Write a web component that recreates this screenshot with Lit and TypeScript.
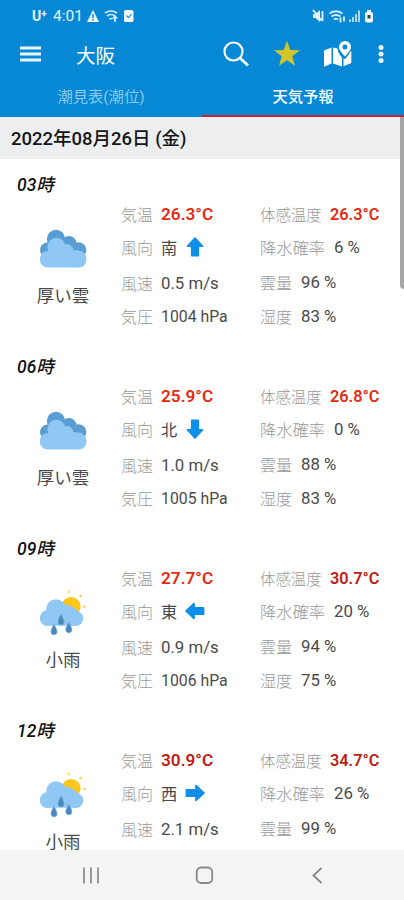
import { LitElement, html, css, svg, nothing } from "lit";
import { customElement, property } from "lit/decorators.js";

const fonts = css`Roboto, "Noto Sans CJK JP", sans-serif`;

interface Hour {
  time: string;
  sky: "cloud" | "rain";
  temp: string;
  feels: string;
  wind: string;
  angle: number;
  speed: string;
  pressure?: string;
  pop: string;
  clouds: string;
  humidity?: string;
  tone: string;
  feelsTone: string;
}

const HOURS: Hour[] = [
  { time: "03", sky: "cloud", temp: "26.3", feels: "26.3", wind: "南", angle: 0, speed: "0.5", pressure: "1004", pop: "6", clouds: "96", humidity: "83", tone: "red", feelsTone: "red" },
  { time: "06", sky: "cloud", temp: "25.9", feels: "26.8", wind: "北", angle: 180, speed: "1.0", pressure: "1005", pop: "0", clouds: "88", humidity: "83", tone: "red", feelsTone: "red" },
  { time: "09", sky: "rain", temp: "27.7", feels: "30.7", wind: "東", angle: 270, speed: "0.9", pressure: "1006", pop: "20", clouds: "94", humidity: "75", tone: "red", feelsTone: "deep" },
  { time: "12", sky: "rain", temp: "30.9", feels: "34.7", wind: "西", angle: 90, speed: "2.1", pop: "26", clouds: "99", tone: "deep", feelsTone: "deep" },
];

const cloudIcon = svg`
  <g fill="#5a9dd2"><circle cx="18" cy="14" r="9.200"/><circle cx="31" cy="18.500" r="7.500"/><circle cx="40.500" cy="25" r="7.800"/><circle cx="9.500" cy="25" r="7.500"/></g>
  <g fill="#8fc8f5"><circle cx="18.500" cy="22" r="9.200"/><circle cx="29" cy="25.500" r="6.500"/><circle cx="10" cy="34" r="8"/><circle cx="40" cy="34" r="8.400"/><circle cx="37" cy="30.500" r="5.500"/><rect x="2" y="27" width="46.400" height="15.500" rx="7.500"/></g>`;

const rainIcon = svg`
  <circle cx="33" cy="17.500" r="9.600" fill="#fdc61a"/>
  <path stroke="#fdc94e" stroke-width="1.700" stroke-linecap="round" d="M30.500 2.200l.3 1.200M43 6.500l-1 1.200M45.800 18l1.400-.3"/>
  <g fill="#90c8f5"><circle cx="18" cy="20" r="9.800"/><circle cx="28.500" cy="22" r="6.500"/><circle cx="10" cy="29" r="8"/><circle cx="33" cy="25" r="7"/><circle cx="37.500" cy="29.500" r="7.500"/><rect x="2" y="22" width="43" height="14.800" rx="7"/></g>
  <path fill="#4a87bb" stroke="#6fa9da" stroke-width=".8" d="M23 25c2 4 3 6 3 8a3 3 0 0 1-6 0c0-2 1-4 3-8zM16 35.500c2 3.500 3 5.500 3 7.300a3 3 0 0 1-6 0c0-1.800 1-3.800 3-7.300zM30.800 33.500c2 3.500 3 5.500 3 7.300a3 3 0 0 1-6 0c0-1.800 1-3.800 3-7.300z"/>`;

@customElement("hour-card")
class HourCard extends LitElement {
  @property({ attribute: false }) hour!: Hour;

  static styles = css`
    :host { display: block; height: 182px; flex: none; font-family: ${fonts}; color: #4a4a4a; }
    .time { height: 38px; padding: 7px 0 0 17px; box-sizing: border-box; line-height: 38px; font-size: 17.5px; font-weight: 500; font-style: italic; color: #111; }
    .body { display: grid; grid-template-columns: 121px 139px 1fr; }
    .sky { display: flex; flex-direction: column; align-items: center; padding: 28px 0 0 5px; width: 121px; height: 134px; box-sizing: border-box; font-size: 17.5px; }
    .sky svg { width: 50px; height: 50px; flex: none; display: block; margin-bottom: 8px; }
    .sky span { line-height: 26px; }
    .col { display: grid; grid-template-rows: 33px 33px 39px 28px; }
    .col.right { grid-template-rows: 34px 32px 38px 29px; }
    .line { display: flex; align-items: center; white-space: nowrap; font-size: 16.8px; }
    .label { font-size: 16px; width: 40px; color: #999; font-weight: 300; }
    .right .label { width: 41px; }
    .right .label.feel { font-size: 15.400px; width: 70px; }
    .right .label.pop { font-size: 16.300px; width: 74px; }
    .dir { font-size: 16.200px; width: 17px; }
    .pressure { font-size: 15.800px; }
    .red, .deep { font-weight: 600; font-size: 17.200px; }
    .right .red, .right .deep { font-size: 16.300px; }
    .red { color: #e62a12; }
    .deep { color: #c01c12; }
    .arrow { width: 20px; height: 20px; margin-left: 7px; }
  `;

  render() {
    const h = this.hour;
    return html`
      <div class="time">${h.time}時</div>
      <div class="body">
        <div class="sky">
          <svg viewBox="0 0 50 50">${h.sky === "cloud" ? cloudIcon : rainIcon}</svg>
          <span>${h.sky === "cloud" ? "厚い雲" : "小雨"}</span>
        </div>
        <div class="col">
          <div class="line"><span class="label">気温</span><span class=${h.tone}>${h.temp}°C</span></div>
          <div class="line"><span class="label">風向</span><span class="dir">${h.wind}</span>
            <svg class="arrow" viewBox="0 0 20 20"><path transform="rotate(${h.angle} 10 10)" fill="#0d8fe8" stroke="#0d8fe8" stroke-width="1.800" stroke-linejoin="round" d="M10 1.200L17.300 9H13.200V18.500H6.800V9H2.700z"/></svg>
          </div>
          <div class="line"><span class="label">風速</span><span>${h.speed} m/s</span></div>
          ${h.pressure ? html`<div class="line"><span class="label">気圧</span><span class="pressure">${h.pressure} hPa</span></div>` : nothing}
        </div>
        <div class="col right">
          <div class="line"><span class="label feel">体感温度</span><span class=${h.feelsTone}>${h.feels}°C</span></div>
          <div class="line"><span class="label pop">降水確率</span><span>${h.pop} %</span></div>
          <div class="line"><span class="label">雲量</span><span>${h.clouds} %</span></div>
          ${h.humidity ? html`<div class="line"><span class="label">湿度</span><span>${h.humidity} %</span></div>` : nothing}
        </div>
      </div>`;
  }
}

@customElement("app-root")
class AppRoot extends LitElement {
  static styles = css`
    :host { display: flex; flex-direction: column; width: 404px; height: 900px; overflow: hidden; background: #fff; font-family: ${fonts}; }
    .top { background: #0688d4; height: 117px; flex: none; color: #fff; }
    .status { height: 31px; display: flex; align-items: center; padding: 0 28px 0 32px; box-sizing: border-box; color: #e8f4fc; font-size: 15.500px; }
    .carrier { font-weight: 700; font-size: 14px; width: 21px; }
    .carrier sup { font-size: 10px; vertical-align: 4px; line-height: 0; }
    .clock { width: 33px; }
    .status svg { display: block; }
    .spacer { flex: 1; }
    .bar { height: 47px; display: flex; align-items: center; }
    .menu { margin-left: 20px; width: 21px; height: 16px; margin-bottom: 2px; }
    .place { margin-left: 35px; font-size: 19.500px; flex: 1; }
    .search { width: 28px; height: 28px; margin-right: 23px; }
    .star { width: 28px; height: 28px; margin-right: 23px; }
    .map { width: 28px; height: 28px; margin-right: 26px; }
    .more { width: 6px; height: 20px; margin-right: 20px; }
    .search, .star, .map, .more { margin-bottom: 2px; }
    .tabs { display: grid; grid-template-columns: 1fr 1fr; height: 39px; font-size: 15.300px; line-height: 39px; text-align: center; }
    .tab { height: 39px; color: #8ac9ee; box-sizing: border-box; }
    .tab.on { color: #f4faff; font-weight: 500; border-bottom: 2px solid #c5242e; }
    .content { flex: 1; min-height: 0; overflow: hidden; display: flex; flex-direction: column; position: relative; }
    .date { height: 42px; flex: none; box-sizing: border-box; padding: 1px 0 0 11px; background: #eceeef; line-height: 43px; font-size: 18.500px; font-weight: 500; color: #151515; }
    .thumb { position: absolute; right: 0; top: 0; width: 4px; height: 172px; background: #a6a6a6; border-radius: 0 0 0 4px; }
    .nav { height: 50px; flex: none; box-sizing: border-box; background: #f4f4f4; display: flex; justify-content: space-between; align-items: center; padding: 0 71px 0 76px; }
    .nav svg { width: 30px; height: 24px; }
  `;

  render() {
    return html`
      <div class="top">
        <div class="status">
          <span class="carrier">U<sup>+</sup></span><span class="clock">4:01</span>
          <svg width="50" height="16" viewBox="0 0 50 16">
            <path fill="#eef7fd" d="M7 2L13 14H1z"/><path stroke="#0688d4" stroke-width="1.500" d="M7 6v4M7 11v1.500"/>
            <g fill="none" stroke="#d5ebf8" stroke-width="1.700"><path d="M19 5q6-4 12 0M21 8q4-3 8 0M23.500 11q1.500-1 3 0"/><path d="M29 14V8M27 10.500l2-2.500l2 2.500"/></g>
            <rect x="38" y="2" width="9.500" height="12" rx="1.500" fill="#f4faff"/><path d="M40.500 7.500l2 2l3-3.500" fill="none" stroke="#0688d4" stroke-width="1.100"/>
          </svg>
          <span class="spacer"></span>
          <svg width="64" height="16" viewBox="0 0 64 16">
            <path fill="#e8f4fc" d="M1 6h2.500L8 2v12L3.500 10H1z"/><path stroke="#e8f4fc" stroke-width="1.800" d="M1 2l9 11M10.500 3v10"/>
            <g fill="none" stroke="#d5ebf8" stroke-width="1.900"><path d="M17.500 5.500q6.500-4.500 13 0M19.500 8.500q4.500-3 9 0M22 11.500q2-1.500 4 0"/><path d="M28.500 9.500v5M32 8.500v5"/></g>
            <path stroke="#b6dcf3" stroke-width="1.900" d="M38 14v-2.500M41 14V9M44 14V6M47 14V2.500"/>
            <rect x="53" y="4" width="8" height="10.500" rx="2" fill="#f4faff"/><path fill="#f4faff" d="M55 2h4v3h-4z"/><rect x="55.500" y="7" width="3" height="3.500" fill="#24485c"/>
          </svg>
        </div>
        <div class="bar">
          <svg class="menu" viewBox="0 0 21 16"><path stroke="#e8f4fc" stroke-width="2.800" d="M0 2h21M0 8h21M0 14h21"/></svg>
          <span class="place">大阪</span>
          <svg class="search" viewBox="0 0 28 28" fill="none" stroke="#fff" stroke-width="2.200"><circle cx="11.500" cy="11.500" r="9"/><path stroke-width="2.600" d="M18 18l8 7.500"/></svg>
          <svg class="star" viewBox="0 0 28 28"><path fill="#d0c52b" d="M14 .8l3.300 9.200l9.700.3l-7.700 6l2.700 9.400L14 20.200l-8 5.500l2.700-9.400L1 10.300l9.700-.3z"/></svg>
          <svg class="map" viewBox="0 0 28 28"><path fill="#fff" d="M0 10.500l7.500-3v16L0 26.800zM9 7.500l4.500 1c.5 4 2.500 7 4.500 9v9L9 23.500zM19.500 18.500l1.500.8q4-4.500 5.500-8l.8-.2V23l-7.800 3.300z"/><path fill="#fff" fill-rule="evenodd" d="M21 1a6 6 0 0 1 6 6c0 3-3 6-6 9.500C18 13 15 10 15 7a6 6 0 0 1 6-6zm0 3.500a2.500 2.500 0 1 0 0 5a2.500 2.500 0 0 0 0-5z"/></svg>
          <svg class="more" viewBox="0 0 6 20" fill="#f2f9fe"><circle cx="3" cy="3.500" r="2.500"/><circle cx="3" cy="10" r="2.500"/><circle cx="3" cy="16.500" r="2.500"/></svg>
        </div>
        <div class="tabs"><div class="tab">潮見表(潮位)</div><div class="tab on">天気予報</div></div>
      </div>
      <div class="content">
        <div class="date">2022年08月26日 (金)</div>
        ${HOURS.map((h) => html`<hour-card .hour=${h}></hour-card>`)}
        <div class="thumb"></div>
      </div>
      <div class="nav">
        <svg viewBox="0 0 30 24"><path stroke="#999" stroke-width="2" d="M8 4.500v16M15 4.500v16M22 4.500v16"/></svg>
        <svg viewBox="0 0 30 24"><rect x="6.700" y="4.500" width="15.500" height="15.500" rx="4.500" fill="none" stroke="#888" stroke-width="1.800"/></svg>
        <svg viewBox="0 0 30 24"><path fill="none" stroke="#888" stroke-width="1.800" d="M18.500 5L10.500 12.500l8 7.500"/></svg>
      </div>`;
  }
}
